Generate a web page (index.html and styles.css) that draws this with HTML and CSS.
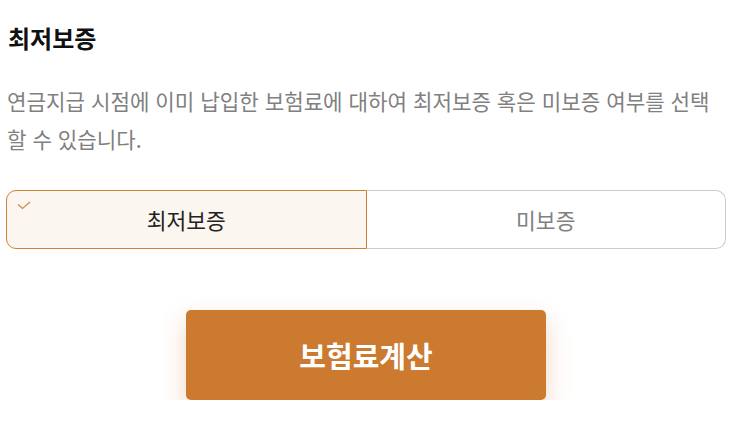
FILE: index.html
```html
<!DOCTYPE html>
<html lang="ko">
<head>
    <meta charset="UTF-8">
    <meta name="viewport" content="width=device-width, initial-scale=1.0">
    <title>최저보증</title>
    <link rel="stylesheet" href="styles.css">
</head>
<body>
    <div class="section">
        <h2 class="section-title">최저보증</h2>
        <p class="section-desc">연금지급 시점에 이미 납입한 보험료에 대하여 최저보증 혹은 미보증 여부를 선택할 수 있습니다.</p>

        <div class="toggle-group">
            <button class="toggle-btn active">
                <svg class="check" width="14" height="9" viewBox="0 0 14 9">
                    <path d="M1 3.5 L5.5 7.5 L13 1" fill="none" stroke="#d08a4a" stroke-width="1.2"/>
                </svg>
                최저보증
            </button>
            <button class="toggle-btn">미보증</button>
        </div>

        <div class="actions">
            <button class="calc-btn">보험료계산</button>
        </div>
    </div>
</body>
</html>
```

FILE: styles.css
```css
body {
    margin: 0;
    font-family: "Noto Sans CJK KR", "Noto Sans", sans-serif;
    background: #fff;
}
.section {
    padding: 18px 10px 0 6px;
}
.section-title {
    margin: 0 0 0 2px;
    font-size: 24px;
    font-weight: bold;
    line-height: 40px;
    color: #111;
}
.section-desc {
    margin: 24px 0 0 1px;
    font-size: 21.2px;
    line-height: 38px;
    color: #808080;
}
.toggle-group {
    display: flex;
    margin-top: 32px;
}
.toggle-btn {
    position: relative;
    flex: 1;
    height: 59px;
    font-family: inherit;
    font-size: 21.5px;
    color: #808080;
    background: #fff;
    border: 1px solid #ccc;
    border-left: none;
    border-radius: 0 10px 10px 0;
    cursor: pointer;
}
.toggle-btn.active {
    color: #222;
    background: #fcf6f0;
    border: 1px solid #d08030;
    border-radius: 10px 0 0 10px;
}
.check {
    position: absolute;
    left: 10px;
    top: 10px;
}
.actions {
    display: flex;
    justify-content: center;
    margin-top: 61px;
}
.calc-btn {
    width: 360px;
    height: 90px;
    font-family: inherit;
    font-size: 29px;
    font-weight: bold;
    color: #fff;
    background: #cc7a30;
    border: none;
    border-radius: 5px;
    box-shadow: 0 10px 24px rgba(204, 122, 48, 0.3);
    cursor: pointer;
}
```
